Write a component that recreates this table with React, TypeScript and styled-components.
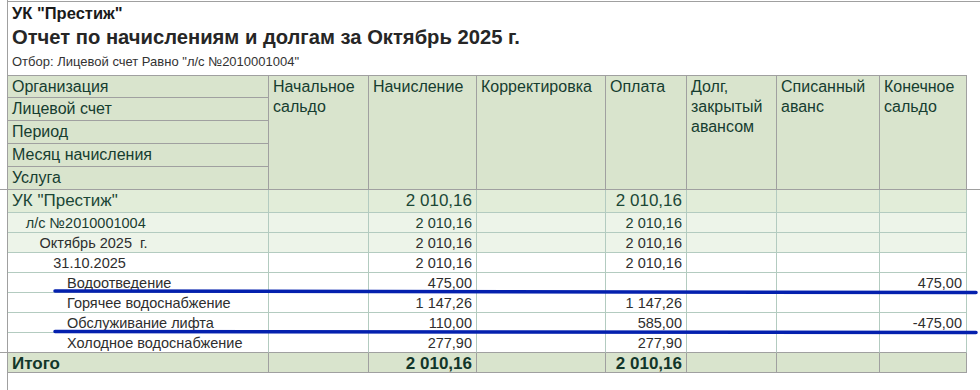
import { createGlobalStyle, styled } from 'styled-components';

const GlobalStyle = createGlobalStyle`
  html, body {
    margin: 0;
    padding: 0;
    background: #ffffff;
  }
  body {
    font-family: "Liberation Sans", Arial, sans-serif;
    color: #333333;
  }
`;

const GRAY = '#a0a0a0';
const GRID = '#b3cbc0';
const HEAD_BG = '#d9e4cd';

const Sheet = styled.div`
  position: relative;
  display: flex;
  min-height: 390px;
`;

const Gutter = styled.div`
  width: 8px;
  flex: none;
  border-right: 1px solid ${GRAY};
  box-sizing: border-box;
  display: flex;
  flex-direction: column;
`;

const GutterMark = styled.div<{ $h: number }>`
  height: ${(p) => p.$h}px;
  border-bottom: 1px solid ${GRAY};
  box-sizing: border-box;
`;

const Content = styled.div`
  flex: 1;
  margin-top: 1px;
  border-top: 1px solid ${GRAY};
`;

const Heading = styled.div`
  display: flex;
  flex-direction: column;
  padding: 3px 0 0 4px;
`;

const OrgName = styled.div`
  font-size: 16.5px;
  font-weight: bold;
  line-height: 16px;
  color: #1a1a1a;
`;

const Title = styled.div`
  margin-top: 5px;
  font-size: 20.2px;
  font-weight: bold;
  line-height: 22px;
  color: #262626;
`;

const Filter = styled.div`
  margin-top: 7px;
  font-size: 13px;
  line-height: 14px;
  color: #333;
`;

const TableRow = styled.div`
  display: flex;
  align-items: flex-start;
  margin-top: 6px;
`;

const Tail = styled.div`
  flex: 1;
  height: 115px;
  border-bottom: 1px solid ${GRAY};
  box-sizing: border-box;
`;

const Grid = styled.div`
  display: grid;
  grid-template-columns: 261px 100px 108px 129px 81px 90px 103px 87px;
  grid-template-rows: 22px 23px 23px 23px 23px 23px repeat(8, 20px) 23px;
  border-top: 1px solid ${GRAY};
`;

const HeadLabel = styled.div<{ $row: number }>`
  grid-column: 1;
  grid-row: ${(p) => p.$row};
  background: ${HEAD_BG};
  border-right: 1px solid ${GRAY};
  border-bottom: 1px solid ${GRAY};
  box-sizing: border-box;
  padding: 1px 4px 0;
  font-size: 16px;
  line-height: 20px;
  color: #163d30;
  white-space: nowrap;
`;

const HeadCol = styled.div<{ $col: number }>`
  grid-column: ${(p) => p.$col};
  grid-row: 1 / span 5;
  background: ${HEAD_BG};
  border-right: 1px solid ${GRAY};
  border-bottom: 1px solid ${GRAY};
  box-sizing: border-box;
  padding: 1px 4px 0;
  font-size: 16px;
  line-height: 20px;
  color: #163d30;
  white-space: nowrap;
`;

type Kind = 'org' | 'group' | 'leaf' | 'total';

const bgOf = (k: Kind) =>
  k === 'org' ? '#e2edd9' : k === 'group' ? '#edf4e9' : k === 'total' ? HEAD_BG : '#ffffff';

const big = (k: Kind) => k === 'org' || k === 'total';

const Cell = styled.div<{
  $kind: Kind;
  $num?: boolean;
  $level?: number;
  $edge?: boolean;
  $color?: string;
}>`
  background: ${(p) => bgOf(p.$kind)};
  border-right: 1px solid ${(p) => (p.$kind === 'total' ? GRAY : GRID)};
  border-bottom: 1px solid
    ${(p) => (p.$kind === 'total' || p.$edge ? GRAY : GRID)};
  box-sizing: border-box;
  padding: ${(p) => (big(p.$kind) ? 0 : 1)}px 4px 0
    ${(p) => (p.$num ? 4 : 4 + (p.$level || 0) * 13.75)}px;
  text-align: ${(p) => (p.$num ? 'right' : 'left')};
  font-size: ${(p) => (big(p.$kind) ? 17 : 14.5)}px;
  font-weight: ${(p) => (p.$kind === 'total' ? 'bold' : 'normal')};
  line-height: ${(p) => (big(p.$kind) ? 22 : 19)}px;
  color: ${(p) => p.$color || '#333'};
  white-space: pre;
  overflow: hidden;
`;

const Marks = styled.svg`
  position: absolute;
  left: 0;
  top: 0;
  pointer-events: none;
`;

type Row = {
  level: number;
  kind: Kind;
  label: string;
  start?: string;
  charge?: string;
  fix?: string;
  pay?: string;
  debt?: string;
  written?: string;
  end?: string;
};

const sum = '2\u00a0010,16';

const rows: Row[] = [
  { level: 0, kind: 'org', label: 'УК "Престиж"', charge: sum, pay: sum },
  { level: 1, kind: 'group', label: 'л/с №2010001004', charge: sum, pay: sum },
  { level: 2, kind: 'group', label: 'Октябрь 2025  г.', charge: sum, pay: sum },
  { level: 3, kind: 'leaf', label: '31.10.2025', charge: sum, pay: sum },
  { level: 4, kind: 'leaf', label: 'Водоотведение', charge: '475,00', end: '475,00' },
  {
    level: 4,
    kind: 'leaf',
    label: 'Горячее водоснабжение',
    charge: '1\u00a0147,26',
    pay: '1\u00a0147,26',
  },
  {
    level: 4,
    kind: 'leaf',
    label: 'Обслуживание лифта',
    charge: '110,00',
    pay: '585,00',
    end: '-475,00',
  },
  {
    level: 4,
    kind: 'leaf',
    label: 'Холодное водоснабжение',
    charge: '277,90',
    pay: '277,90',
  },
];

const textColor = (level: number) =>
  level === 0 ? '#1b4736' : level === 1 ? '#1c3d31' : '#2e2e2e';

const labels = ['Организация', 'Лицевой счет', 'Период', 'Месяц начисления', 'Услуга'];

const columns = [
  'Начальное\nсальдо',
  'Начисление',
  'Корректировка',
  'Оплата',
  'Долг,\nзакрытый\nавансом',
  'Списанный\nаванс',
  'Конечное\nсальдо',
];

export default function App() {
  return (
    <>
      <GlobalStyle />
      <Sheet>
        <Gutter>
          <GutterMark $h={190} />
          <GutterMark $h={163} />
        </Gutter>
        <Content>
          <Heading>
            <OrgName>УК "Престиж"</OrgName>
            <Title>Отчет по начислениям и долгам за Октябрь 2025 г.</Title>
            <Filter>Отбор: Лицевой счет Равно "л/с №2010001004"</Filter>
          </Heading>
          <TableRow>
            <Grid>
              {labels.map((l, i) => (
                <HeadLabel key={l} $row={i + 1}>
                  {l}
                </HeadLabel>
              ))}
              {columns.map((c, i) => (
                <HeadCol key={c} $col={i + 2}>
                  {c.split('\n').map((line) => (
                    <div key={line}>{line}</div>
                  ))}
                </HeadCol>
              ))}

              {rows.map((r, i) => {
                const edge = i === rows.length - 1;
                const color = textColor(r.level);
                const values = [r.start, r.charge, r.fix, r.pay, r.debt, r.written, r.end];
                return [
                  <Cell
                    key={`${i}-label`}
                    $kind={r.kind}
                    $level={r.level}
                    $edge={edge}
                    $color={color}
                  >
                    {r.label}
                  </Cell>,
                  ...values.map((v, j) => (
                    <Cell
                      key={`${i}-${j}`}
                      $kind={r.kind}
                      $num
                      $edge={edge}
                      $color={color}
                    >
                      {v || ''}
                    </Cell>
                  )),
                ];
              })}

              <Cell $kind="total" $color="#12362a">
                Итого
              </Cell>
              <Cell $kind="total" $num />
              <Cell $kind="total" $num $color="#12362a">
                {sum}
              </Cell>
              <Cell $kind="total" $num />
              <Cell $kind="total" $num $color="#12362a">
                {sum}
              </Cell>
              <Cell $kind="total" $num />
              <Cell $kind="total" $num />
              <Cell $kind="total" $num />
            </Grid>
            <Tail />
          </TableRow>
        </Content>
        <Marks width="980" height="390" viewBox="0 0 980 390">
          <line
            x1="55"
            y1="291"
            x2="976"
            y2="292.5"
            stroke="#0420ae"
            strokeWidth="3.5"
            strokeLinecap="round"
          />
          <line
            x1="55"
            y1="331.5"
            x2="976"
            y2="332.5"
            stroke="#0420ae"
            strokeWidth="3.5"
            strokeLinecap="round"
          />
        </Marks>
      </Sheet>
    </>
  );
}
